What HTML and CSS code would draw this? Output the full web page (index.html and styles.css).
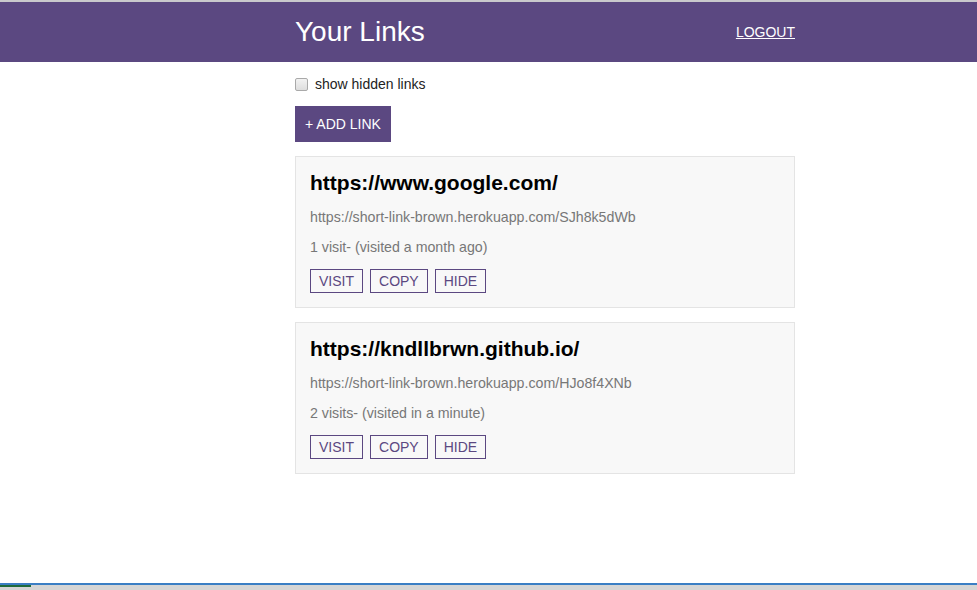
FILE: index.html
```html
<!DOCTYPE html>
<html>
<head>
<meta charset="utf-8">
<title>Your Links</title>
<link rel="stylesheet" href="styles.css">
</head>
<body>
<header class="header">
  <div class="wrap header-inner">
    <h1 class="header-title">Your Links</h1>
    <a class="logout" href="#">LOGOUT</a>
  </div>
</header>
<main class="wrap main">
  <label class="toggle">
    <input type="checkbox" class="toggle-box">
    <span>show hidden links</span>
  </label>
  <div><button class="add-btn">+ ADD LINK</button></div>
  <div class="card">
    <h2 class="card-title">https://www.google.com/</h2>
    <p class="card-meta">https://short-link-brown.herokuapp.com/SJh8k5dWb</p>
    <p class="card-meta">1 visit- (visited a month ago)</p>
    <div class="actions">
      <button class="act">VISIT</button>
      <button class="act">COPY</button>
      <button class="act">HIDE</button>
    </div>
  </div>
  <div class="card">
    <h2 class="card-title">https://kndllbrwn.github.io/</h2>
    <p class="card-meta">https://short-link-brown.herokuapp.com/HJo8f4XNb</p>
    <p class="card-meta">2 visits- (visited in a minute)</p>
    <div class="actions">
      <button class="act">VISIT</button>
      <button class="act">COPY</button>
      <button class="act">HIDE</button>
    </div>
  </div>
</main>
<div class="taskbar"><span class="taskbar-tab"></span></div>
</body>
</html>
```
FILE: styles.css
```css
* { box-sizing: border-box; }
html, body { margin: 0; padding: 0; }
body {
  font-family: "Liberation Sans", Arial, sans-serif;
  font-size: 14px;
  color: #222;
  background: #fff;
  border-top: 2px solid #c9c9cc;
}
.wrap {
  width: 500px;
  margin-left: 295px;
}
.header {
  background: #5b4881;
  height: 60px;
}
.header-inner {
  height: 60px;
  display: flex;
  align-items: center;
  justify-content: space-between;
}
.header-title {
  margin: 0;
  font-weight: normal;
  font-size: 28px;
  line-height: 32px;
  color: #fff;
}
.logout {
  color: #fff;
  font-size: 14px;
  text-decoration: underline;
}
.main {
  padding-top: 14px;
  display: flex;
  flex-direction: column;
  gap: 14px;
}
.toggle {
  display: flex;
  align-items: center;
  height: 16px;
  line-height: 16px;
  color: #222;
}
.toggle-box {
  -webkit-appearance: none;
  appearance: none;
  width: 13px;
  height: 13px;
  margin: 0 7px 0 0;
  border: 1px solid #a9a9a9;
  border-radius: 2px;
  background: linear-gradient(#f2f2f2, #dedede);
}
.add-btn {
  background: #5b4881;
  color: #fff;
  border: none;
  font-family: inherit;
  font-size: 14px;
  line-height: 16px;
  padding: 10px 10px;
  cursor: pointer;
}
.card {
  background: #f8f8f8;
  border: 1px solid #e4e4e4;
  padding: 14px;
  display: flex;
  flex-direction: column;
  gap: 14px;
}
.card-title {
  margin: 0;
  font-size: 21px;
  line-height: 24px;
  font-weight: bold;
  color: #000;
}
.card-meta {
  margin: 0;
  font-size: 14.2px;
  line-height: 16px;
  color: #777;
}
.actions {
  display: flex;
  gap: 7px;
}
.act {
  background: transparent;
  border: 1px solid #5b4881;
  color: #5b4881;
  font-family: inherit;
  font-size: 14px;
  line-height: 16px;
  padding: 3px 8px;
  cursor: pointer;
}
.taskbar {
  position: fixed;
  left: 0;
  right: 0;
  bottom: 0;
  height: 7px;
  background: #d5d5d5;
  border-top: 2px solid #3b7ec4;
}
.taskbar-tab {
  display: block;
  width: 31px;
  height: 2px;
  background: #1f6a3b;
}
```
